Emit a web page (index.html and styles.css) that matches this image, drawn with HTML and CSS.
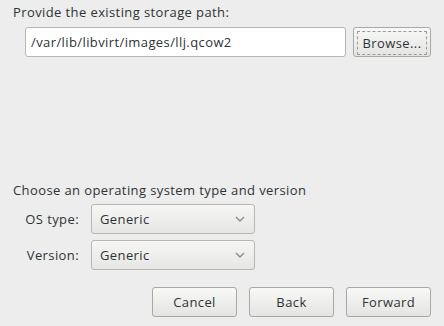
FILE: index.html
```html
<!DOCTYPE html>
<html lang="en">
<head>
    <meta charset="UTF-8">
    <title>New VM - Step 2</title>
    <link rel="stylesheet" href="styles.css">
</head>
<body>
    <div class="janela">
        <div class="seccao">
            <p class="titulo">Provide the existing storage path:</p>
            <div class="linha-caminho">
                <input class="entrada" type="text" value="/var/lib/libvirt/images/llj.qcow2">
                <button class="botao botao-foco"><span>Browse...</span></button>
            </div>
        </div>

        <div class="seccao seccao-os">
            <p class="titulo">Choose an operating system type and version</p>
            <div class="grelha-os">
                <span class="rotulo">OS type:</span>
                <div class="combo">
                    <span>Generic</span>
                    <svg width="10" height="6" viewBox="0 0 10 6"><path d="M1 1 L5 5 L9 1" fill="none" stroke="#8a8e8a" stroke-width="1.4"/></svg>
                </div>
                <span class="rotulo">Version:</span>
                <div class="combo">
                    <span>Generic</span>
                    <svg width="10" height="6" viewBox="0 0 10 6"><path d="M1 1 L5 5 L9 1" fill="none" stroke="#8a8e8a" stroke-width="1.4"/></svg>
                </div>
            </div>
        </div>

        <div class="rodape">
            <button class="botao botao-acao">Cancel</button>
            <button class="botao botao-acao">Back</button>
            <button class="botao botao-acao">Forward</button>
        </div>
    </div>
</body>
</html>
```

FILE: styles.css
```css
:root {
    --cor-fundo: #ededed;
    --cor-texto: #2e3436;
    --cor-borda: #b6b6b3;
}

body {
    margin: 0;
    background: var(--cor-fundo);
    color: var(--cor-texto);
    font-family: 'Open Sans', 'DejaVu Sans', sans-serif;
    font-size: 13px;
    letter-spacing: 0.4px;
}

.janela {
    height: 326px;
    box-sizing: border-box;
    padding: 3px 13px 9px 13px;
    display: flex;
    flex-direction: column;
}

.titulo {
    margin: 0;
    line-height: 18px;
}

.linha-caminho {
    display: flex;
    gap: 7px;
    margin: 6px 0 0 12px;
}

.entrada {
    width: 321px;
    height: 30px;
    box-sizing: border-box;
    border: 1px solid var(--cor-borda);
    border-radius: 3px;
    background: white;
    color: var(--cor-texto);
    font: inherit;
    letter-spacing: inherit;
    padding: 0 5px;
    outline: none;
}

.botao {
    height: 30px;
    box-sizing: border-box;
    border: 1px solid #a8a8a5;
    border-radius: 3px;
    background: linear-gradient(#f8f8f7, #e4e4e2);
    color: var(--cor-texto);
    font: inherit;
    letter-spacing: inherit;
    padding: 0;
}

.botao-foco {
    width: 78px;
    padding: 3px;
}

.botao-foco span {
    display: flex;
    align-items: center;
    justify-content: center;
    height: 100%;
    border: 1px dashed #9a9a98;
    border-radius: 1px;
}

.seccao-os {
    margin-top: auto;
}

.grelha-os {
    display: grid;
    grid-template-columns: 66px 164px;
    column-gap: 12px;
    row-gap: 6px;
    align-items: center;
    margin: 5px 0 0 0;
}

.rotulo {
    text-align: right;
}

.combo {
    height: 30px;
    box-sizing: border-box;
    border: 1px solid var(--cor-borda);
    border-radius: 3px;
    background: linear-gradient(#f6f6f5, #e6e6e4);
    display: flex;
    align-items: center;
    justify-content: space-between;
    padding: 0 9px 0 8px;
}

.rodape {
    display: flex;
    justify-content: flex-end;
    gap: 12px;
    margin-top: 17px;
}

.botao-acao {
    width: 85px;
}
```
